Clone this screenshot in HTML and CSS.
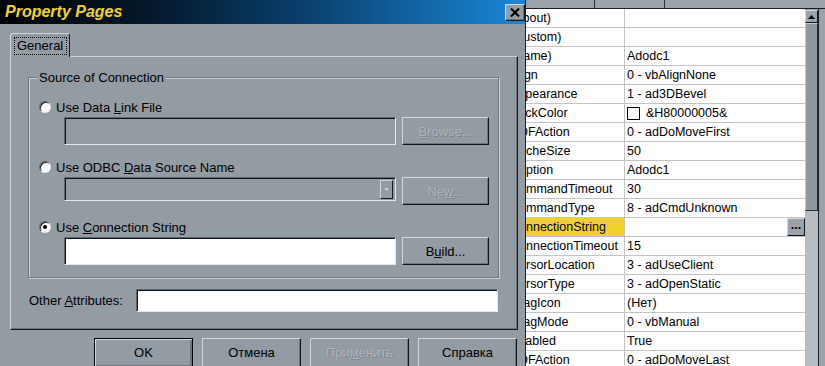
FILE: index.html
```html
<!DOCTYPE html>
<html lang="en">
<head>
  <meta charset="UTF-8" />
  <title>Property Pages</title>
  <link rel="stylesheet" href="styles.css">
</head>
<body>
<div class="desk">
  <div class="dialog">
    <div class="titlebar">
      <span class="title">Property Pages</span>
      <span class="close">
        <svg width="10" height="9" viewBox="0 0 10 9"><path d="M1 0.5 L9 8.5 M9 0.5 L1 8.5" stroke="#000" stroke-width="2"/></svg>
      </span>
    </div>
    <div class="dlg-body">
      <div class="tab"><span class="focus">General</span></div>
      <div class="panel">
        <div class="group">
          <span class="legend">Source of Connection</span>
          <div class="opt"><span class="radio"></span><span>Use Data <u>L</u>ink File</span></div>
          <div class="field-row">
            <div class="textbox off"></div>
            <div class="btn off"><span><u>B</u>rowse...</span></div>
          </div>
          <div class="opt"><span class="radio"></span><span>Use ODBC <u>D</u>ata Source Name</span></div>
          <div class="field-row">
            <div class="textbox combo off"><span class="drop"><svg width="5" height="3" viewBox="0 0 5 3"><path d="M0 0 H5 L2.5 3 Z" fill="#c4cad0"/></svg></span></div>
            <div class="btn off"><span>Ne<u>w</u>...</span></div>
          </div>
          <div class="opt"><span class="radio on"></span><span>Use <u>C</u>onnection String</span></div>
          <div class="field-row">
            <div class="textbox"></div>
            <div class="btn"><span>B<u>u</u>ild...</span></div>
          </div>
        </div>
        <div class="attr-row">
          <span class="attr-label">Other <u>A</u>ttributes:</span>
          <div class="textbox attr"></div>
        </div>
      </div>
      <div class="buttons">
        <div class="btn big default">OK</div>
        <div class="btn big">Отмена</div>
        <div class="btn big off"><span>При<u>м</u>енить</span></div>
        <div class="btn big">Справка</div>
      </div>
    </div>
  </div>

  <div class="props">
    <div class="props-top"><span class="ptab one"></span><span class="ptab two"></span></div>
    <div class="props-main">
      <div class="grid">
        <div class="row"><div class="name">(About)</div><div class="val"></div></div>
        <div class="row"><div class="name">(Custom)</div><div class="val"></div></div>
        <div class="row"><div class="name">(Name)</div><div class="val">Adodc1</div></div>
        <div class="row"><div class="name">Align</div><div class="val">0 - vbAlignNone</div></div>
        <div class="row"><div class="name">Appearance</div><div class="val">1 - ad3DBevel</div></div>
        <div class="row"><div class="name">BackColor</div><div class="val"><span class="swatch"></span>&amp;H80000005&amp;</div></div>
        <div class="row"><div class="name">BOFAction</div><div class="val">0 - adDoMoveFirst</div></div>
        <div class="row"><div class="name">CacheSize</div><div class="val">50</div></div>
        <div class="row"><div class="name">Caption</div><div class="val">Adodc1</div></div>
        <div class="row"><div class="name">CommandTimeout</div><div class="val">30</div></div>
        <div class="row"><div class="name">CommandType</div><div class="val">8 - adCmdUnknown</div></div>
        <div class="row"><div class="name sel">ConnectionString</div><div class="val"><span></span><span class="dots">...</span></div></div>
        <div class="row"><div class="name">ConnectionTimeout</div><div class="val">15</div></div>
        <div class="row"><div class="name">CursorLocation</div><div class="val">3 - adUseClient</div></div>
        <div class="row"><div class="name">CursorType</div><div class="val">3 - adOpenStatic</div></div>
        <div class="row"><div class="name">DragIcon</div><div class="val">(Нет)</div></div>
        <div class="row"><div class="name">DragMode</div><div class="val">0 - vbManual</div></div>
        <div class="row"><div class="name">Enabled</div><div class="val">True</div></div>
        <div class="row"><div class="name">EOFAction</div><div class="val">0 - adDoMoveLast</div></div>
      </div>
      <div class="scroll">
        <div class="sb-up"><svg width="7" height="4" viewBox="0 0 7 4"><path d="M3.5 0 L7 4 H0 Z" fill="#000"/></svg></div>
        <div class="sb-thumb"></div>
        <div class="sb-track"></div>
      </div>
      <div class="frame-r"></div>
    </div>
  </div>
</div>
</body>
</html>
```

FILE: styles.css
```css
* { box-sizing: border-box; }
body { margin: 0; width: 825px; height: 366px; overflow: hidden; background: #939ba3; font-family: "Liberation Sans", Arial, sans-serif; font-size: 13px; color: #000; }
u { text-decoration: underline; text-underline-offset: 1px; }

.desk { display: flex; height: 366px; }

/* dialog */
.dialog { width: 526px; flex: none; background: #939ba3; border-right: 1px solid #1c2024; }
.titlebar { height: 24px; display: flex; align-items: center; justify-content: space-between; padding: 0 0 0 5px; background: linear-gradient(90deg, #000 0%, #041a2e 30%, #0a4676 62%, #1a88d8 100%); }
.title { color: #f2d22c; font-weight: bold; font-style: italic; font-size: 16px; }
.close { width: 20px; height: 17px; display: flex; align-items: center; justify-content: center; background: #939ba3; border: 1px solid; border-color: #d4d9de #15191d #15191d #d4d9de; box-shadow: inset -1px -1px 0 #6c747c; }

.dlg-body { padding: 9px 0 0 10px; }
.tab { position: relative; z-index: 1; width: 60px; height: 24px; margin-bottom: -1px; padding: 3px 2px 0 3px; background: #939ba3; border: 1px solid; border-bottom: none; border-color: #cdd3d9 #15191d #cdd3d9 #cdd3d9; border-radius: 3px 3px 0 0; }
.focus { display: block; height: 18px; line-height: 16px; padding-left: 2px; border: 1px dotted #000; }

.panel { width: 508px; height: 274px; border: 1px solid; border-color: #cdd3d9 #15191d #15191d #cdd3d9; box-shadow: inset -1px -1px 0 #6c747c; padding: 20px 0 0 17px; }

.group { width: 471px; height: 201px; border: 1px solid #6e767e; box-shadow: 1px 1px 0 #cdd3d9, inset 1px 1px 0 #cdd3d9; padding: 0 0 0 10px; }
.legend { display: block; width: fit-content; height: 15px; line-height: 15px; margin: -8px 0 0 -2px; padding: 0 2px; background: #939ba3; }
.opt { display: flex; align-items: center; gap: 5px; height: 16px; margin-top: 14px; }
.radio { width: 12px; height: 12px; flex: none; border-radius: 50%; background: #fff; border: 1px solid; border-color: #5a6268 #eef1f4 #eef1f4 #5a6268; box-shadow: inset 1px 1px 0 #1a1e22; display: flex; align-items: center; justify-content: center; }
.radio.on::after { content: ""; width: 4px; height: 4px; border-radius: 50%; background: #000; }

.field-row { display: flex; align-items: flex-start; gap: 6px; margin: 2px 0 0 25px; }
.textbox { width: 332px; height: 28px; background: #fff; border: 1px solid; border-color: #5e666e #e4e8ec #e4e8ec #5e666e; box-shadow: inset 1px 1px 0 #101418; }
.textbox.off { background: #939ba3; }
.combo { height: 24px; display: flex; justify-content: flex-end; padding: 2px 2px 2px 0; }
.drop { width: 13px; height: 19px; display: flex; align-items: center; justify-content: center; border: 1px solid; border-color: #cdd3d9 #15191d #15191d #cdd3d9; }

.btn { width: 87px; height: 28px; display: flex; align-items: center; justify-content: center; background: #939ba3; border: 1px solid; border-color: #d4d9de #101418 #101418 #d4d9de; box-shadow: inset -1px -1px 0 #6c747c; }
.btn.off { color: #aeb4ba; text-shadow: 1px 1px 0 #7e868e; }

.attr-row { display: flex; align-items: center; height: 23px; margin: 11px 0 0 1px; }
.attr-label { width: 107px; }
.textbox.attr { width: 362px; height: 23px; }

.buttons { display: flex; gap: 9px; margin: 8px 0 0 84px; }
.btn.big { width: 99px; height: 30px; padding-bottom: 2px; }
.btn.default { border-color: #000; box-shadow: inset 1px 1px 0 #d4d9de, inset -2px -2px 0 #6c747c; }

/* property grid */
.props { flex: 1; display: flex; flex-direction: column; background: #9aa2aa; font-size: 12.5px; }
.props-top { height: 9px; flex: none; border-bottom: 1px solid #1c2024; display: flex; }
.ptab { border-right: 1px solid #2a2e32; height: 8px; }
.ptab.one { width: 69px; }
.ptab.two { width: 70px; }
.props-main { flex: 1; display: flex; }
.grid { width: 279px; background: #fff; overflow: hidden; }
.row { display: flex; height: 19px; border-bottom: 1px solid #c4c4c4; }
.name { width: 99px; flex: none; border-right: 1px solid #c4c4c4; overflow: hidden; white-space: nowrap; text-indent: -16px; line-height: 18px; }
.name.sel { background: #f2d12f; }
.val { flex: 1; display: flex; align-items: center; justify-content: space-between; padding-left: 2px; white-space: nowrap; }
.val:has(.swatch) { justify-content: flex-start; }
.swatch { width: 13px; height: 13px; border: 1px solid #000; background: #fff; margin-right: 6px; }
.dots { width: 18px; height: 18px; display: flex; align-items: center; justify-content: center; font-weight: bold; background: #9aa2aa; border: 1px solid; border-color: #d4d9de #101418 #101418 #d4d9de; padding-bottom: 4px; }

.scroll { width: 13px; flex: none; display: flex; flex-direction: column; padding-top: 1px; }
.sb-up { height: 13px; display: flex; align-items: center; justify-content: center; background: #9aa2aa; border: 1px solid; border-color: #d4d9de #15191d #15191d #d4d9de; }
.sb-thumb { height: 188px; background: #8e969e; border: 1px solid; border-color: #c4cad0 #2a2e32 #2a2e32 #c4cad0; }
.sb-track { flex: 1; background: #b6bcc2; }
.frame-r { flex: 1; border-left: 1px solid #1c2024; background: #9aa2aa; }
```
